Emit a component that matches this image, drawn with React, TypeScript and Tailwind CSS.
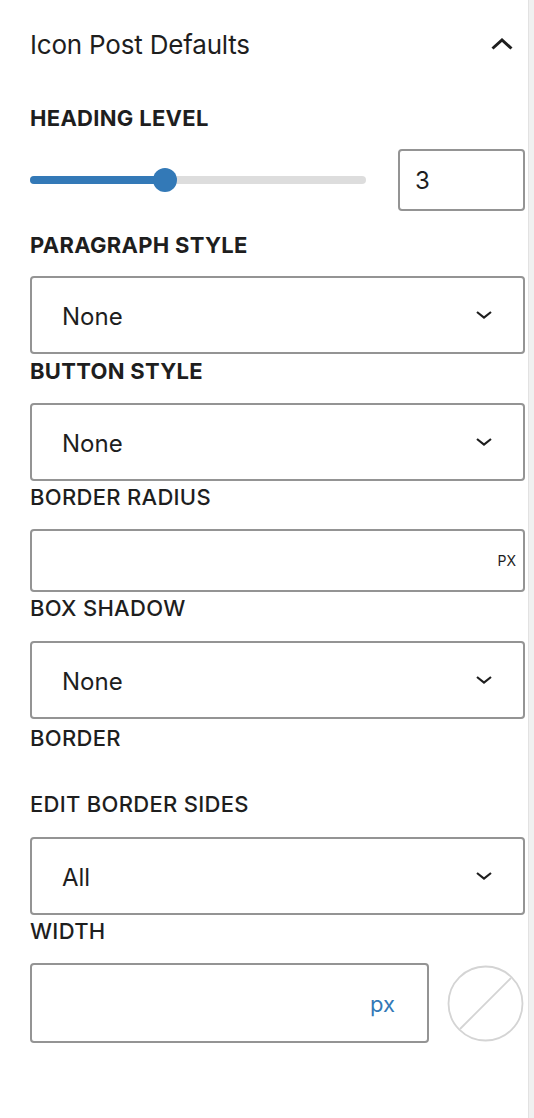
import React from "react";

const font = { fontFamily: "Inter, 'Noto Sans', sans-serif" };

function ChevronDown() {
  return (
    <svg width="16" height="8" viewBox="0 0 16 8" fill="none" className="shrink-0">
      <polyline points="1,1 8,6.5 15,1" stroke="#1e1e1e" strokeWidth="2.2" />
    </svg>
  );
}

function Label({ children, bold, className }: { children: React.ReactNode; bold?: boolean; className?: string }) {
  return (
    <div
      className={`text-[22px] leading-[22px] uppercase tracking-[0.3px] text-[#1e1e1e] ${bold ? "font-bold" : "font-medium"} ${className ?? ""}`}
    >
      {children}
    </div>
  );
}

function Select({ value, className }: { value: string; className?: string }) {
  return (
    <div
      className={`flex h-[78px] items-center justify-between rounded-[4px] border-2 border-[#949494] pl-[30px] pr-[31px] ${className ?? ""}`}
    >
      <span className="text-[24px] leading-[30px] pt-[3px] text-[#1e1e1e]">{value}</span>
      <ChevronDown />
    </div>
  );
}

export default function App() {
  return (
    <div className="flex min-h-[1118px] w-[534px] bg-white" style={font}>
      <div className="flex-1 pl-[30px] pr-[3px] pt-[29px]">
        {/* panel header */}
        <div className="flex h-[32px] justify-between">
          <h2 className="text-[26px] leading-[32px] tracking-[-0.2px] font-normal text-[#1e1e1e]">Icon Post Defaults</h2>
          <svg width="22" height="12" viewBox="0 0 22 12" fill="none" className="mr-[12px] mt-[9px]">
            <polyline points="1.5,10.5 11,2 20.5,10.5" stroke="#1e1e1e" strokeWidth="3" />
          </svg>
        </div>

        <Label bold className="mt-[46px]">Heading Level</Label>
        <div className="mt-[20px] flex h-[62px] items-center">
          <div className="relative mr-[32px] h-[8px] flex-1 rounded-full bg-[#dddddd]">
            <div className="absolute left-0 top-0 h-[8px] w-[135px] rounded-full bg-[#3379b7]" />
            <div className="absolute left-[123px] top-[-8px] h-[24px] w-[24px] rounded-full bg-[#3379b7]" />
          </div>
          <div className="flex h-[62px] w-[127px] items-center rounded-[4px] border-2 border-[#949494] pl-[15px]">
            <span className="text-[24px] leading-[30px] pt-[2px] text-[#1e1e1e]">3</span>
          </div>
        </div>

        <Label bold className="mt-[23px]">Paragraph Style</Label>
        <Select value="None" className="mt-[20px]" />

        <Label bold className="mt-[6px]">Button Style</Label>
        <Select value="None" className="mt-[21px]" />

        <Label className="mt-[5px]">Border Radius</Label>
        <div className="mt-[21px] flex h-[63px] items-center justify-end rounded-[4px] border-2 border-[#949494] pr-[7px]">
          <span className="text-[14px] text-[#1e1e1e]">PX</span>
        </div>

        <Label className="mt-[5px]">Box Shadow</Label>
        <Select value="None" className="mt-[22px]" />

        <Label className="mt-[8px]">Border</Label>

        <Label className="mt-[44px]">Edit Border Sides</Label>
        <Select value="All" className="mt-[22px]" />

        <Label className="mt-[5px]">Width</Label>
        <div className="mt-[21px] flex items-center">
          <div className="flex h-[80px] w-[399px] items-center justify-end rounded-[4px] border-2 border-[#949494] pr-[32px]">
            <span className="text-[22px] leading-[28px] pt-[2px] text-[#3379b7]">px</span>
          </div>
          <svg width="77" height="77" viewBox="0 0 77 77" className="ml-[18px]">
            <circle cx="38.5" cy="38.5" r="37" fill="none" stroke="#d4d4d4" strokeWidth="1.8" />
            <line x1="13" y1="64" x2="64" y2="13" stroke="#d4d4d4" strokeWidth="1.8" />
          </svg>
        </div>
      </div>
      <div className="w-[6px] border-l border-[#e2e2e2] bg-[#f0f0f0]" />
    </div>
  );
}
